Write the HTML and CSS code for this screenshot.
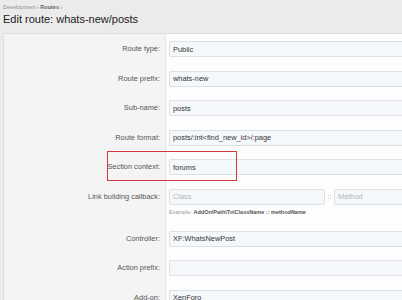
FILE: index.html
```html
<!DOCTYPE html>
<html lang="en">
<head>
    <meta charset="UTF-8">
    <meta name="viewport" content="width=device-width, initial-scale=1.0">
    <title>Edit route: whats-new/posts</title>
    <link rel="stylesheet" href="styles.css">
</head>
<body>
    <div class="crumbs">Development <span class="sep">&rsaquo;</span> <b>Routes</b> <span class="sep">&rsaquo;</span></div>
    <h1>Edit route: whats-new/posts</h1>
    <div class="panel">
        <div class="row">
            <label>Route type:</label>
            <div class="field"><input class="input" type="text" value="Public"></div>
        </div>
        <div class="row">
            <label>Route prefix:</label>
            <div class="field"><input class="input" type="text" value="whats-new"></div>
        </div>
        <div class="row">
            <label>Sub-name:</label>
            <div class="field"><input class="input" type="text" value="posts"></div>
        </div>
        <div class="row">
            <label>Route format:</label>
            <div class="field"><input class="input" type="text" value="posts/:int<find_new_id>/:page"></div>
        </div>
        <div class="row marked">
            <label>Section context:</label>
            <div class="field"><input class="input" type="text" value="forums"></div>
            <div class="highlight"></div>
        </div>
        <div class="row">
            <label>Link building callback:</label>
            <div class="field">
                <div class="split">
                    <input class="input class-input" type="text" placeholder="Class">
                    <span class="colons">::</span>
                    <input class="input" type="text" placeholder="Method">
                </div>
                <div class="hint">Example: <b>AddOn\Path\To\ClassName</b> <span class="dc">::</span> <b>methodName</b></div>
            </div>
        </div>
        <div class="row">
            <label>Controller:</label>
            <div class="field"><input class="input" type="text" value="XF:WhatsNewPost"></div>
        </div>
        <div class="row">
            <label>Action prefix:</label>
            <div class="field"><input class="input" type="text" value=""></div>
        </div>
        <div class="row">
            <label>Add-on:</label>
            <div class="field"><input class="input" type="text" value="XenForo"></div>
        </div>
    </div>
</body>
</html>
```

FILE: styles.css
```css
body{
    margin: 0;
    background: #ebebeb;
    font-family: "Liberation Sans", Arial, sans-serif;
    overflow: hidden;
}
.crumbs{
    height: 10px;
    line-height: 10px;
    padding: 2px 3px 0;
    font-size: 5.5px;
    color: #8c8c8c;
}
.crumbs b{
    color: #666;
}
h1{
    margin: 0;
    padding: 0 3px;
    font-size: 11px;
    line-height: 14px;
    font-weight: normal;
    color: #222;
}
.panel{
    margin: 7px 0 0 3px;
    border: 1px solid #dedede;
    border-right: none;
}
.row{
    display: grid;
    grid-template-columns: 162px 1fr;
    position: relative;
}
.row label{
    background: #f4f4f4;
    border-right: 1px solid #e6e6e6;
    text-align: right;
    padding: 7px 5px 0 0;
    line-height: 16px;
    font-size: 7.4px;
    color: #555;
}
.field{
    background: #fdfdfd;
    padding: 7px 0 6.5px 3px;
}
.input{
    display: block;
    box-sizing: border-box;
    width: 100%;
    height: 16px;
    margin: 0;
    padding: 0 3px;
    border: 1px solid #dde0e4;
    border-right: none;
    border-radius: 2px 0 0 2px;
    background: #f5f8fb;
    font-family: inherit;
    font-size: 7.4px;
    line-height: 14px;
    color: #333;
}
.input::placeholder{
    color: #b4b4b4;
}
.split{
    display: flex;
    align-items: center;
}
.class-input{
    width: 156px;
    flex: none;
    border-right: 1px solid #dde0e4;
    border-radius: 2px;
}
.colons{
    width: 9px;
    text-align: center;
    font-size: 7px;
    color: #999;
}
.split .input:last-child{
    flex: 1;
    width: auto;
    min-width: 0;
}
.hint{
    margin-top: 3px;
    line-height: 9.5px;
    font-size: 5.5px;
    color: #9a9a9a;
}
.hint b, .hint .dc{
    color: #555;
    font-weight: bold;
}
.highlight{
    position: absolute;
    left: 103px;
    top: -1px;
    width: 130px;
    height: 30px;
    box-sizing: border-box;
    border: 1.5px solid #d2383c;
}
```
